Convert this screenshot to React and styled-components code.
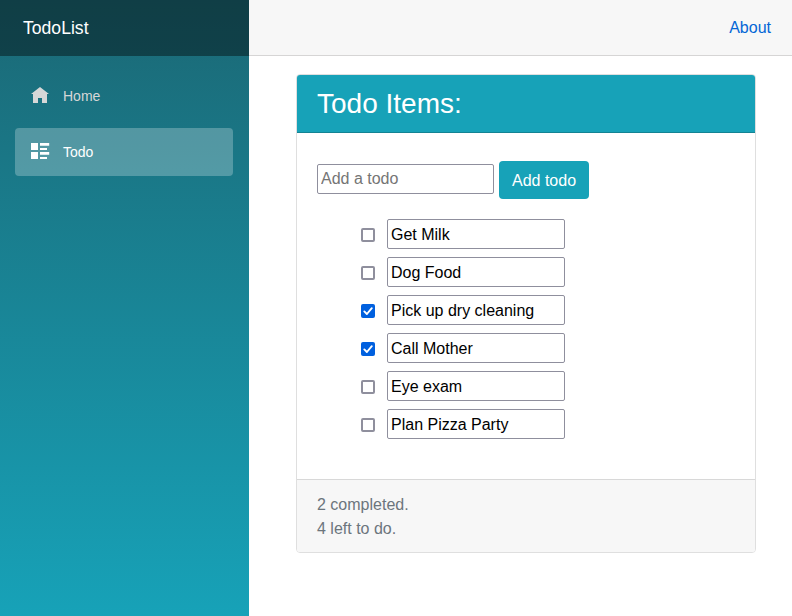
import React, { useState } from 'react';
import styled, { createGlobalStyle } from 'styled-components';

const GlobalStyle = createGlobalStyle`
  *, *::before, *::after { box-sizing: border-box; }
  body {
    margin: 0;
    background: #fff;
    color: #212529;
    font: 16px/24px "Liberation Sans", Arial, sans-serif;
    overflow: hidden;
  }
`;

const Page = styled.div`
  display: flex;
  height: 100vh;
`;

const Sidebar = styled.aside`
  width: 249px;
  flex: none;
  background: linear-gradient(180deg, #1b6875 0%, #17a2b8 100%);
`;

const Brand = styled.div`
  height: 56px;
  display: flex;
  align-items: center;
  padding-left: 23px;
  background: rgba(0, 0, 0, 0.4);
  color: #fff;
  font-size: 17.6px;
`;

const Nav = styled.nav`
  display: flex;
  flex-direction: column;
  gap: 8px;
  padding: 16px 16px 0 15px;
`;

const NavItem = styled.a`
  display: flex;
  align-items: center;
  height: 48px;
  padding-left: 16px;
  border-radius: 4px;
  font-size: 14px;
  text-decoration: none;
  color: ${(p) => (p.$active ? '#fff' : '#d7d7d7')};
  background: ${(p) => (p.$active ? 'rgba(255, 255, 255, 0.25)' : 'transparent')};
`;

const NavIcon = styled.svg`
  width: 19px;
  height: 16px;
  margin: 0 13px 2px 0;
  fill: currentColor;
`;

const Main = styled.main`
  flex: 1;
  min-width: 0;
`;

const TopBar = styled.header`
  height: 56px;
  display: flex;
  align-items: center;
  justify-content: flex-end;
  padding-right: 21px;
  background: #f7f7f7;
  border-bottom: 1px solid #d6d5d5;
`;

const TopLink = styled.a`
  color: #0366d6;
  text-decoration: none;
`;

const Card = styled.section`
  width: 460px;
  margin: 18px 0 0 47px;
  border: 1px solid #dfdfdf;
  border-radius: 4px;
  overflow: hidden;
`;

const CardHeader = styled.div`
  height: 58px;
  padding: 12px 20px;
  background: #17a2b8;
  border-bottom: 1px solid #148393;
`;

const Title = styled.h3`
  margin: 0;
  color: #fff;
  font-size: 28px;
  font-weight: 400;
  line-height: 33.6px;
`;

const CardBody = styled.div`
  height: 346px;
  padding: 28px 20px 0;
`;

const AddRow = styled.form`
  display: flex;
  align-items: flex-start;
  gap: 5px;
`;

const TextInput = styled.input`
  width: ${(p) => p.$width}px;
  height: 30px;
  padding: 1px 3px 0;
  border: 1px solid #8f8f9d;
  border-radius: 2px;
  background: #fff;
  color: #000;
  font: inherit;
  outline: none;
  &::placeholder { color: #757575; opacity: 1; }
`;

const DraftInput = styled(TextInput)`
  margin-top: 3px;
  padding: 0 3px 1px;
`;

const AddButton = styled.button`
  width: 90px;
  height: 38px;
  padding: 2px 0 0;
  border: 0;
  border-radius: 4px;
  background: #17a2b8;
  color: #fff;
  font: inherit;
`;

const TodoList = styled.ul`
  display: flex;
  flex-direction: column;
  gap: 8px;
  margin: 20px 0 0;
  padding: 0 0 0 44px;
  list-style: none;
`;

const TodoRow = styled.li`
  display: flex;
  align-items: center;
  gap: 12px;
`;

const Checkbox = styled.button`
  width: 14px;
  height: 14px;
  margin-top: 2px;
  padding: 0;
  display: flex;
  border: ${(p) => (p.$checked ? '0' : '2px solid #8f8f9d')};
  border-radius: 2px;
  background: ${(p) => (p.$checked ? '#0060df' : '#fff')};
`;

const CardFooter = styled.div`
  padding: 13px 20px 11px;
  background: #f7f7f7;
  border-top: 1px solid #d8d8d8;
  color: #6c757d;
`;

const initialTodos = [
  { title: 'Get Milk', done: false },
  { title: 'Dog Food', done: false },
  { title: 'Pick up dry cleaning', done: true },
  { title: 'Call Mother', done: true },
  { title: 'Eye exam', done: false },
  { title: 'Plan Pizza Party', done: false },
];

export default function App() {
  const [todos, setTodos] = useState(initialTodos);
  const [draft, setDraft] = useState('');
  const completed = todos.filter((t) => t.done).length;

  const update = (index, change) =>
    setTodos(todos.map((t, i) => (i === index ? { ...t, ...change } : t)));

  const addTodo = (event) => {
    event.preventDefault();
    if (!draft.trim()) return;
    setTodos([...todos, { title: draft, done: false }]);
    setDraft('');
  };

  return (
    <Page>
      <GlobalStyle />
      <Sidebar>
        <Brand>TodoList</Brand>
        <Nav>
          <NavItem href="#home">
            <NavIcon viewBox="0 0 19 16">
              <path d="M9 0L0 7h2v9h5v-5h4v5h5V7h2z" />
            </NavIcon>
            Home
          </NavItem>
          <NavItem href="#todo" $active>
            <NavIcon viewBox="0 0 19 16">
              <path d="M0 0h7v7H0zM9 0h9.2v2.7H9zM9 5h7v2H9zM0 9h7v7H0zM9 9h9.2v2.7H9zM9 14h7v2H9z" />
            </NavIcon>
            Todo
          </NavItem>
        </Nav>
      </Sidebar>
      <Main>
        <TopBar>
          <TopLink href="#about">About</TopLink>
        </TopBar>
        <Card>
          <CardHeader>
            <Title>Todo Items:</Title>
          </CardHeader>
          <CardBody>
            <AddRow onSubmit={addTodo}>
              <DraftInput
                $width={177}
                placeholder="Add a todo"
                value={draft}
                onChange={(e) => setDraft(e.target.value)}
              />
              <AddButton>Add todo</AddButton>
            </AddRow>
            <TodoList>
              {todos.map((todo, i) => (
                <TodoRow key={i}>
                  <Checkbox
                    type="button"
                    role="checkbox"
                    aria-checked={todo.done}
                    $checked={todo.done}
                    onClick={() => update(i, { done: !todo.done })}
                  >
                    {todo.done && (
                      <svg width="14" height="14" viewBox="0 0 14 14" fill="none">
                        <path
                          d="M3.3 7.4L5.9 10L10.8 4.2"
                          stroke="#fff"
                          strokeWidth="1.9"
                          strokeLinecap="round"
                          strokeLinejoin="round"
                        />
                      </svg>
                    )}
                  </Checkbox>
                  <TextInput
                    $width={178}
                    value={todo.title}
                    onChange={(e) => update(i, { title: e.target.value })}
                  />
                </TodoRow>
              ))}
            </TodoList>
          </CardBody>
          <CardFooter>
            <div>{completed} completed.</div>
            <div>{todos.length - completed} left to do.</div>
          </CardFooter>
        </Card>
      </Main>
    </Page>
  );
}
